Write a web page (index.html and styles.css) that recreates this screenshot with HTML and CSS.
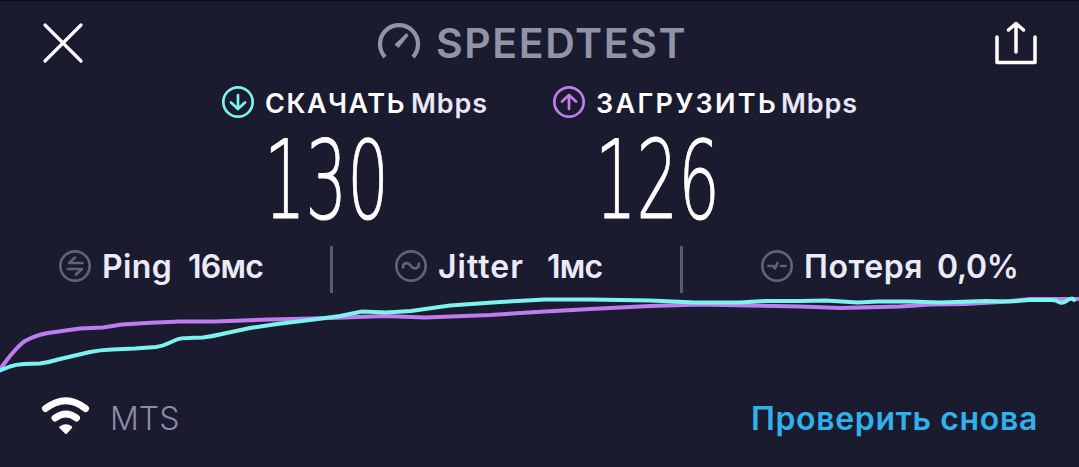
FILE: index.html
```html
<!DOCTYPE html>
<html lang="ru">
<head>
    <meta charset="UTF-8">
    <meta name="viewport" content="width=device-width, initial-scale=1.0">
    <title>Speedtest</title>
    <link rel="stylesheet" href="styles.css">
</head>
<body>
    <header class="top-bar">
        <svg class="close" width="42" height="42" viewBox="0 0 42 42">
            <path d="M3 3L39 39M39 3L3 39"/>
        </svg>
        <div class="logo">
            <svg class="gauge" width="44" height="38" viewBox="0 0 44 38">
                <path class="gauge-ring" d="M8 34A19 19 0 1 1 36 34"/>
                <path class="gauge-needle" d="M29.500 10L31.500 12.400L21.500 25L17.500 21.500Z"/>
            </svg>
            <span class="logo-text">SPEEDTEST</span>
        </div>
        <svg class="share" width="42" height="44" viewBox="0 0 42 44">
            <path d="M2 16V41.500H40V16M21 31V3M13.500 9L21 2.500L28.500 9"/>
        </svg>
    </header>

    <section class="results">
        <div class="result">
            <div class="result-head">
                <svg class="icon download" width="34" height="34" viewBox="0 0 34 34">
                    <circle cx="17" cy="17" r="14.700"/>
                    <path d="M17 10V24M10 17.500L17 24L24 17.500"/>
                </svg>
                <span class="result-name name-download">СКАЧАТЬ</span>
                <span class="unit">Mbps</span>
            </div>
            <div class="value">130</div>
        </div>
        <div class="result">
            <div class="result-head">
                <svg class="icon upload" width="34" height="34" viewBox="0 0 34 34">
                    <circle cx="17" cy="17" r="14.700"/>
                    <path d="M17 24V10M10 16.500L17 10L24 16.500"/>
                </svg>
                <span class="result-name name-upload">ЗАГРУЗИТЬ</span>
                <span class="unit">Mbps</span>
            </div>
            <div class="value">126</div>
        </div>
    </section>

    <section class="stats">
        <div class="stat ping">
            <svg class="icon muted" width="34" height="34" viewBox="0 0 34 34">
                <circle cx="17" cy="17" r="14.700"/>
                <path d="M24.500 14H11L17 8.500M10 20H24L18 25.500"/>
            </svg>
            <span class="stat-name">Ping</span>
            <span class="stat-value">16мс</span>
        </div>
        <div class="stat jitter">
            <svg class="icon muted" width="34" height="34" viewBox="0 0 34 34">
                <circle cx="17" cy="17" r="14.700"/>
                <path d="M9 18.500C9 13 14 13 17 17S25 20 25 14.500"/>
            </svg>
            <span class="stat-name">Jitter</span>
            <span class="stat-value">1мс</span>
        </div>
        <div class="stat loss">
            <svg class="icon muted" width="34" height="34" viewBox="0 0 34 34">
                <circle cx="17" cy="17" r="14.700"/>
                <path d="M8.500 17H13L15 19.500L17.500 14M21 17H25.500"/>
            </svg>
            <span class="stat-name">Потеря</span>
            <span class="stat-value">0,0%</span>
        </div>
    </section>

    <svg class="chart" width="1079" height="82" viewBox="0 293 1079 82">
        <path class="line-upload" d="M0 369L10 356Q20 344 25 341Q36 335 48 333L80 328.500L103 327.500L122 324.500Q150 322.500 180 321.500L215 321.500L270 319.500L330 318L385 316L425 317.500L490 315L545 311.500L600 308.500L650 306L700 304.500L750 305.500L800 306.500L840 308L880 307L900 306.500L930 304.500L965 304L1000 302L1030 299H1078"/>
        <path class="line-download" d="M0 370.500L10 366.500Q16 364.500 24 364L40 363.500Q50 362 58 359.500L90 352Q100 350 112 349.500L135 348.500L156 347Q163 346 169 343L177 339.500Q181 338 188 338L203 337.500Q214 336 222 334L250 328L277 324L310 320L340 316L362 311.500L386 312.500L411 311L450 305.500L500 302L545 299.500L590 299.500L650 300.500L695 302.500L740 302.500L765 301L800 301L825 300.500L858 302.500L878 301.500L910 301.500L940 302.500L985 301L1010 301.500L1030 300L1052 300Q1056 300 1059 302T1067 300.500T1074 300"/>
    </svg>

    <footer class="bottom-bar">
        <svg class="wifi" width="50" height="40" viewBox="0 0 50 40">
            <path class="wifi-arc" d="M4.500 11.500Q25 -4 44.500 11.500M14 21Q25 13 35.500 21"/>
            <path class="wifi-dot" d="M18.500 29.500Q25 25 31 29.500Q31.500 30.500 31 31L26 36.500Q25 37.500 24 36.500L18.500 31Q18 30.500 18.500 29.500Z"/>
        </svg>
        <span class="provider">MTS</span>
        <a class="again">Проверить снова</a>
    </footer>
</body>
</html>
```
FILE: styles.css
```css
body {
    margin: 0;
    height: 467px;
    box-sizing: border-box;
    border-top: 1px solid #080820;
    background-color: #1b1b2f;
    color: #fff;
    font-family: Inter, "Noto Sans", sans-serif;
    overflow: hidden;
    white-space: nowrap;
}

svg {
    display: block;
    flex-shrink: 0;
    fill: none;
    stroke-linecap: round;
    stroke-linejoin: round;
}

.top-bar {
    height: 83px;
    display: flex;
    align-items: center;
    justify-content: space-between;
    padding: 0 42px;
    box-sizing: border-box;
}

.close,
.share {
    stroke: #fff;
    stroke-width: 3.2;
}

.share {
    stroke-width: 3.5;
}

.logo {
    display: flex;
    align-items: center;
    gap: 15px;
    color: #9193a8;
    margin-right: 17px;
}

.gauge {
    margin-top: -2px;
}

.gauge-ring {
    stroke: #9193a8;
    stroke-width: 4.2;
    stroke-linecap: butt;
}

.gauge-needle {
    fill: #9193a8;
}

.logo-text {
    font-size: 41px;
    font-weight: 600;
    line-height: 50px;
    width: 249px;
    letter-spacing: 1.6px;
}

.results {
    display: flex;
    padding-left: 221px;
    height: 160px;
}

.result {
    width: 331px;
}

.result-head {
    display: flex;
    align-items: center;
    height: 36px;
}

.icon {
    stroke-width: 2.7;
}

.download {
    stroke: #7cf3ec;
}

.upload {
    stroke: #c07df0;
}

.muted {
    stroke: #626275;
}

.result-name {
    font-size: 27px;
    font-weight: 600;
    margin-left: 10px;
    padding-top: 3px;
}

.name-download {
    width: 146px;
    letter-spacing: 1.5px;
}

.name-upload {
    width: 185px;
    letter-spacing: 2.3px;
}

.unit {
    font-size: 27px;
    font-weight: 600;
    color: #e8e6f7;
    padding-top: 3px;
    letter-spacing: .9px;
}

.value {
    font-family: "DejaVu Sans Light", "DejaVu Sans", sans-serif;
    font-size: 108px;
    font-weight: 200;
    line-height: 122px;
    margin-left: 43px;
    transform: scaleX(.605);
    transform-origin: left;
    -webkit-text-stroke: 1px #fff;
}

.stats {
    display: grid;
    grid-template-columns: 333px 350px 396px;
    height: 47px;
    margin-top: 2px;
    color: #eceaf8;
    font-size: 32px;
    font-weight: 600;
}

.stat {
    display: flex;
    align-items: center;
    box-sizing: border-box;
    padding-bottom: 7px;
}

.ping,
.jitter {
    border-right: 3px solid #5b5b6e;
}

.ping {
    padding-left: 58px;
}

.jitter {
    padding-left: 61px;
}

.loss {
    padding-left: 77px;
}

.stat-name {
    margin-left: 10px;
}

.ping .stat-name {
    width: 86px;
    letter-spacing: .4px;
}

.jitter .stat-name {
    width: 109px;
    letter-spacing: 1px;
}

.loss .stat-name {
    width: 133px;
    letter-spacing: .6px;
}

.stat-value {
    letter-spacing: -.8px;
}

.loss .stat-value {
    letter-spacing: -.3px;
}

.line-upload,
.line-download {
    stroke-width: 4;
}

.line-upload {
    stroke: #bd7df0;
}

.line-download {
    stroke: #7cf3ec;
}

.bottom-bar {
    display: flex;
    align-items: center;
    height: 84px;
    padding: 0 41px;
    font-size: 32px;
}

.wifi-arc {
    stroke: #fff;
    stroke-width: 7;
}

.wifi-dot {
    fill: #fff;
}

.provider {
    margin-left: 19px;
    padding-top: 2px;
    color: #8c8ca5;
    font-weight: 300;
}

.again {
    margin-left: auto;
    padding-top: 2px;
    color: #31b1ec;
    font-weight: 600;
    letter-spacing: .65px;
}
```
